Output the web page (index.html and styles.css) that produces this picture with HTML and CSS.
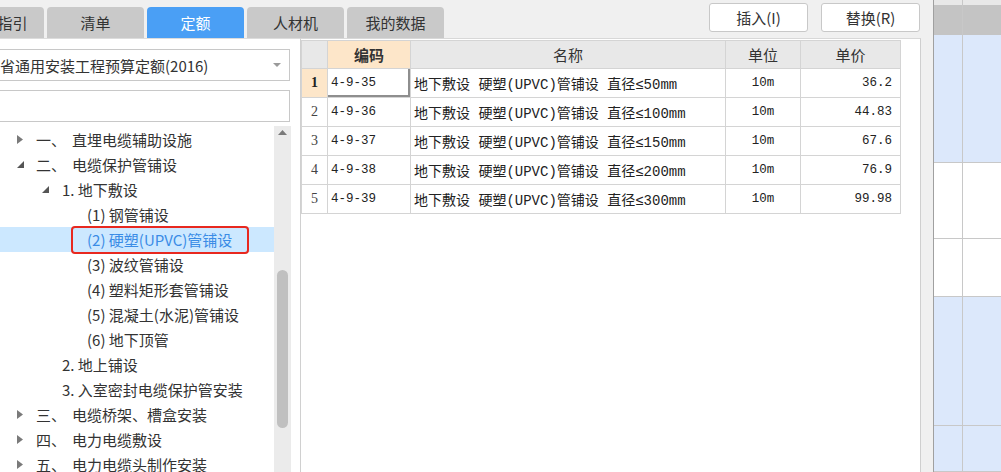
FILE: index.html
```html
<!DOCTYPE html>
<html lang="zh-CN">
  <head>
    <meta charset="UTF-8" />
    <title>定额</title>
    <link rel="stylesheet" href="styles.css">
  </head>
  <body>
    <div class="app">
      <div class="main">
        <div class="topbar">
          <div class="tabs">
            <div class="tab first">指引</div>
            <div class="tab">清单</div>
            <div class="tab active">定额</div>
            <div class="tab">人材机</div>
            <div class="tab">我的数据</div>
          </div>
          <div class="actions">
            <button class="btn">插入(I)</button>
            <button class="btn">替换(R)</button>
          </div>
        </div>

        <div class="content">
          <div class="left-panel">
            <div class="select">
              <span class="select-text">省通用安装工程预算定额(2016)</span>
              <svg class="select-arrow" width="8" height="4" viewBox="0 0 8 4"><path d="M0 0h8L4 4z" fill="#9a9a9a"/></svg>
            </div>
            <div class="search"></div>

            <div class="tree-wrap">
              <div class="tree">
                <div class="tree-row lv1">
                  <span class="twisty"><svg width="6" height="9" viewBox="0 0 6 9"><path d="M0 0l6 4.5L0 9z" fill="#7a7a7a"/></svg></span>
                  <span class="num">一、</span><span>直埋电缆辅助设施</span>
                </div>
                <div class="tree-row lv1">
                  <span class="twisty"><svg width="7" height="7" viewBox="0 0 7 7"><path d="M7 0v7H0z" fill="#555"/></svg></span>
                  <span class="num">二、</span><span>电缆保护管铺设</span>
                </div>
                <div class="tree-row lv2">
                  <span class="twisty"><svg width="7" height="7" viewBox="0 0 7 7"><path d="M7 0v7H0z" fill="#555"/></svg></span>
                  <span>1. 地下敷设</span>
                </div>
                <div class="tree-row lv3"><span>(1) 钢管铺设</span></div>
                <div class="tree-row lv3 selected"><span>(2) 硬塑(UPVC)管铺设</span></div>
                <div class="tree-row lv3"><span>(3) 波纹管铺设</span></div>
                <div class="tree-row lv3"><span>(4) 塑料矩形套管铺设</span></div>
                <div class="tree-row lv3"><span>(5) 混凝土(水泥)管铺设</span></div>
                <div class="tree-row lv3"><span>(6) 地下顶管</span></div>
                <div class="tree-row lv2"><span class="twisty"></span><span>2. 地上铺设</span></div>
                <div class="tree-row lv2"><span class="twisty"></span><span>3. 入室密封电缆保护管安装</span></div>
                <div class="tree-row lv1">
                  <span class="twisty"><svg width="6" height="9" viewBox="0 0 6 9"><path d="M0 0l6 4.5L0 9z" fill="#7a7a7a"/></svg></span>
                  <span class="num">三、</span><span>电缆桥架、槽盒安装</span>
                </div>
                <div class="tree-row lv1">
                  <span class="twisty"><svg width="6" height="9" viewBox="0 0 6 9"><path d="M0 0l6 4.5L0 9z" fill="#7a7a7a"/></svg></span>
                  <span class="num">四、</span><span>电力电缆敷设</span>
                </div>
                <div class="tree-row lv1">
                  <span class="twisty"><svg width="6" height="9" viewBox="0 0 6 9"><path d="M0 0l6 4.5L0 9z" fill="#7a7a7a"/></svg></span>
                  <span class="num">五、</span><span>电力电缆头制作安装</span>
                </div>
              </div>
              <div class="scrollbar">
                <svg class="scroll-up" width="9" height="5" viewBox="0 0 9 5"><path d="M0 5h9L4.5 0z" fill="#7a7a7a"/></svg>
                <div class="scroll-thumb"></div>
              </div>
            </div>
          </div>

          <div class="grid-panel">
            <table class="grid">
              <colgroup>
                <col style="width: 26px">
                <col style="width: 83px">
                <col style="width: 315px">
                <col style="width: 75px">
                <col style="width: 100px">
              </colgroup>
              <thead>
                <tr>
                  <th class="rownum"></th>
                  <th class="hl">编码</th>
                  <th>名称</th>
                  <th>单位</th>
                  <th>单价</th>
                </tr>
              </thead>
              <tbody>
                <tr>
                  <td class="rownum current">1</td>
                  <td class="code focus">4-9-35</td>
                  <td class="name">地下敷设 硬塑(UPVC)管铺设 直径≤50mm</td>
                  <td class="unit">10m</td>
                  <td class="price">36.2</td>
                </tr>
                <tr>
                  <td class="rownum">2</td>
                  <td class="code">4-9-36</td>
                  <td class="name">地下敷设 硬塑(UPVC)管铺设 直径≤100mm</td>
                  <td class="unit">10m</td>
                  <td class="price">44.83</td>
                </tr>
                <tr>
                  <td class="rownum">3</td>
                  <td class="code">4-9-37</td>
                  <td class="name">地下敷设 硬塑(UPVC)管铺设 直径≤150mm</td>
                  <td class="unit">10m</td>
                  <td class="price">67.6</td>
                </tr>
                <tr>
                  <td class="rownum">4</td>
                  <td class="code">4-9-38</td>
                  <td class="name">地下敷设 硬塑(UPVC)管铺设 直径≤200mm</td>
                  <td class="unit">10m</td>
                  <td class="price">76.9</td>
                </tr>
                <tr>
                  <td class="rownum">5</td>
                  <td class="code">4-9-39</td>
                  <td class="name">地下敷设 硬塑(UPVC)管铺设 直径≤300mm</td>
                  <td class="unit">10m</td>
                  <td class="price">99.98</td>
                </tr>
              </tbody>
            </table>
          </div>
        </div>
      </div>

      <div class="side">
        <div class="side-gap"></div>
        <div class="side-grid">
          <div class="cell top"></div><div class="cell top"></div>
          <div class="cell head"></div><div class="cell head"></div>
          <div class="cell blue"></div><div class="cell blue"></div>
          <div class="cell"></div><div class="cell"></div>
          <div class="cell"></div><div class="cell"></div>
          <div class="cell blue"></div><div class="cell blue"></div>
          <div class="cell blue"></div><div class="cell blue"></div>
        </div>
      </div>
    </div>
  </body>
</html>
```

FILE: styles.css
```css
/* Page */
body {
  margin: 0;
  background: #f0f0f0;
  font-family: "Noto Sans CJK SC", "Noto Sans", sans-serif;
  font-size: 15px;
  color: #333;
  overflow: hidden;
}

.app {
  display: flex;
  width: 1001px;
  height: 472px;
  overflow: hidden;
}

.main {
  width: 921px;
  display: flex;
  flex-direction: column;
}

/* Top bar with tabs and buttons */
.topbar {
  height: 38px;
  display: flex;
  justify-content: space-between;
  flex-shrink: 0;
}

.tabs {
  display: flex;
  gap: 3px;
  margin-left: -19px;
  padding-top: 7px;
}

.tab {
  width: 97px;
  height: 31px;
  line-height: 31px;
  text-align: center;
  background: #c9c9c9;
  border-radius: 4px 4px 0 0;
  color: #333;
}

.tab.first {
  width: 63px;
}

.tab.active {
  background: #4a9ff5;
  color: #fff;
}

.actions {
  display: flex;
  gap: 13px;
  padding: 3px 1px 0 0;
}

.btn {
  width: 99px;
  height: 29px;
  background: #fff;
  border: 1px solid #c8c8c8;
  border-radius: 3px;
  font-family: inherit;
  font-size: 15px;
  color: #333;
  padding: 0;
}

/* Content */
.content {
  flex: 1;
  display: flex;
  min-height: 0;
}

.left-panel {
  width: 301px;
  box-sizing: border-box;
  background: #fff;
  border-right: 1px solid #d0d0d0;
  border-top: 1px solid #dcdcdc;
  display: flex;
  flex-direction: column;
  padding-top: 10px;
}

.select,
.search {
  height: 32px;
  box-sizing: border-box;
  margin: 0 10px 0 -10px;
  border: 1px solid #c8c8c8;
  background: #fff;
}

.select {
  display: flex;
  align-items: center;
  justify-content: space-between;
  padding: 0 8px 0 9px;
}

.select-text {
  white-space: nowrap;
}

.search {
  margin-top: 9px;
}

/* Tree */
.tree-wrap {
  flex: 1;
  display: flex;
  margin-top: 4px;
  min-height: 0;
}

.tree {
  flex: 1;
  padding-top: 1px;
}

.tree-row {
  height: 25px;
  display: flex;
  align-items: center;
  white-space: nowrap;
}

.tree-row.lv1 { padding-left: 17px; }
.tree-row.lv2 { padding-left: 42px; }
.tree-row.lv3 { padding-left: 87px; }

.twisty {
  width: 20px;
  display: flex;
  align-items: center;
}

.tree-row.lv1 .twisty { width: 19px; }

.num {
  width: 36px;
}

.tree-row.selected {
  position: relative;
  background: #cce8ff;
  color: #3a8ce6;
}

/* red annotation box around the selected item */
.tree-row.selected::after {
  content: "";
  position: absolute;
  left: 71px;
  top: -1px;
  width: 178px;
  height: 28px;
  box-sizing: border-box;
  border: 2.5px solid #e8281f;
  border-radius: 4px;
}

.scrollbar {
  width: 17px;
  margin-right: 9px;
  background: #ebebeb;
}

.scroll-up {
  display: block;
  margin: 4px auto 0;
}

.scroll-thumb {
  width: 11px;
  height: 158px;
  margin: 135px auto 0;
  background: #c0c0c0;
  border-radius: 6px;
}

/* Grid */
.grid-panel {
  width: 620px;
  box-sizing: border-box;
  background: #fff;
  border-top: 1px solid #d8d8d8;
  border-right: 1px solid #cfcfcf;
  padding-top: 1px;
}

.grid {
  border-collapse: collapse;
  table-layout: fixed;
  width: 600px;
}

.grid th,
.grid td {
  border: 1px solid #d4d4d4;
  padding: 0;
  white-space: nowrap;
  overflow: hidden;
}

.grid th {
  height: 27px;
  background: #e8e8e8;
  font-weight: normal;
  text-align: center;
}

.grid th.hl {
  background: #fde6c9;
  font-weight: bold;
}

.grid td {
  height: 28px;
  font-family: "Liberation Mono", "Noto Sans CJK SC", monospace;
  font-size: 12.5px;
  color: #222;
}

.grid td.rownum {
  font-family: "Liberation Serif", serif;
  font-size: 14px;
  text-align: center;
  color: #444;
}

.grid td.rownum.current {
  background: #fde6c9;
  font-weight: bold;
  color: #222;
}

.grid td.code {
  padding-left: 3px;
}

.grid td.focus {
  border-left: 1px solid #5ea6f0;
  border-top: 1px solid #5ea6f0;
  box-shadow: inset -2px -2px 0 #8e8e8e;
}

.grid td.name {
  font-size: 14px;
  padding-left: 3px;
}

.grid td.unit {
  text-align: center;
}

.grid td.price {
  text-align: right;
  padding-right: 8px;
}

/* Right side sheet */
.side {
  flex: 1;
  display: flex;
}

.side-gap {
  width: 12px;
  background: #f0f0f0;
}

.side-grid {
  flex: 1;
  border-left: 1px solid #a0a0a0;
  display: grid;
  grid-template-columns: 29px 1fr;
  grid-template-rows: 5px 30px 128px 76px 58px 129px 1fr;
  background: #fff;
}

.cell {
  border-bottom: 1px solid #c8c8c8;
}

.cell:nth-child(odd) {
  border-right: 1px solid #c8c8c8;
}

.cell.top {
  background: #e8e8e8;
  border-bottom: none;
}

.cell.head {
  background: #c4c4c4;
  border-bottom: none;
}

.cell.blue {
  background: #dce8fb;
}
```
